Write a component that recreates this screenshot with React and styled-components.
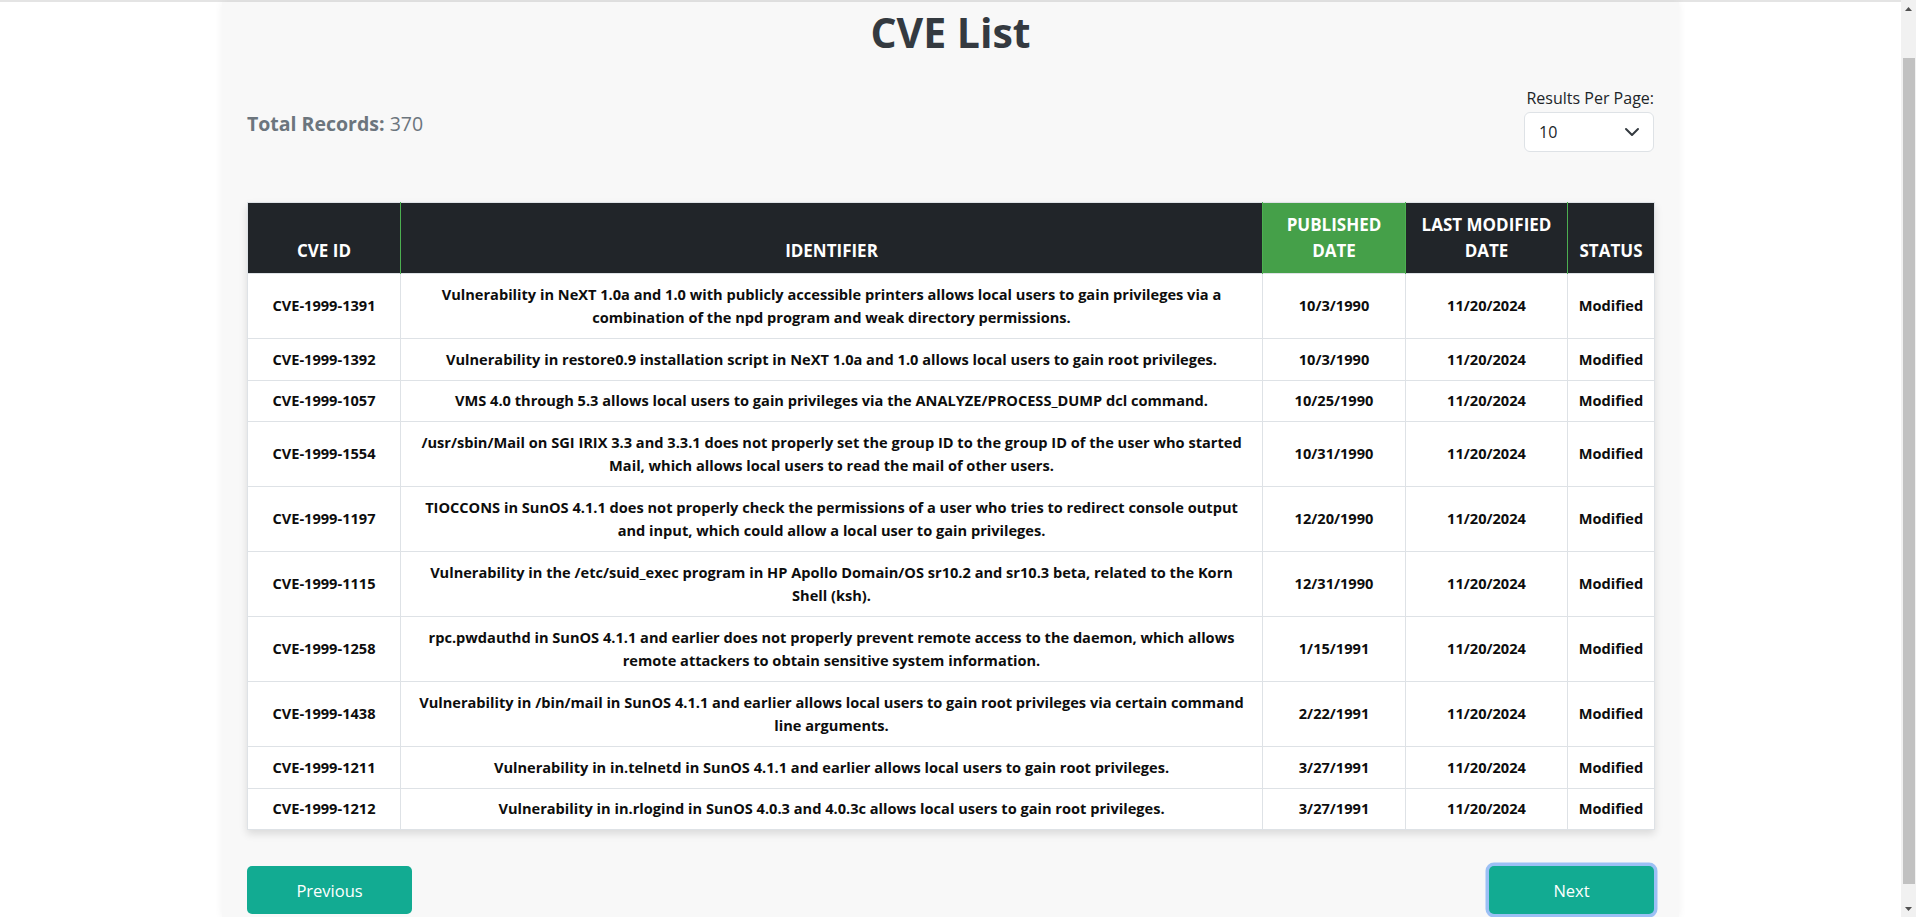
import React from "react";
import styled, { createGlobalStyle } from "styled-components";

const GlobalStyle = createGlobalStyle`
  body {
    margin: 0;
    background: #ffffff;
    font-family: "Open Sans", "Noto Sans", sans-serif;
    color: #212529;
  }
`;

const Window = styled.div`
  display: flex;
  height: 100vh;
  overflow: hidden;
`;

const Viewport = styled.div`
  flex: 1;
  display: flex;
  flex-direction: column;
  min-width: 0;
`;

const TopRule = styled.div`
  height: 2px;
  flex: none;
  background: #e4e4e4;
`;

const Page = styled.main`
  flex: 1;
  width: 1457px;
  margin: 0 auto;
  box-sizing: border-box;
  padding: 5px 25px 0;
  background: #f8f8f8;
  box-shadow: 0 0 8px rgba(0, 0, 0, 0.06);
`;

const Title = styled.h1`
  margin: 0;
  font-size: 41px;
  line-height: 50px;
  font-weight: 700;
  text-align: center;
  color: #343a40;
`;

const Toolbar = styled.div`
  display: flex;
  justify-content: space-between;
  align-items: center;
  margin-top: 30px;
`;

const Total = styled.div`
  font-size: 19.5px;
  line-height: 30px;
  color: #6c757d;
  padding-top: 8px;

  & strong {
    font-weight: 700;
  }
`;

const PerPage = styled.label`
  display: flex;
  flex-direction: column;
  align-items: flex-end;
  font-size: 16px;
  line-height: 22px;
  color: #212529;
`;

const SelectBox = styled.div`
  position: relative;
  width: 130px;
  margin-top: 3px;
`;

const Select = styled.select`
  appearance: none;
  width: 100%;
  height: 40px;
  box-sizing: border-box;
  padding: 0 32px 0 14px;
  border: 1px solid #dee2e6;
  border-radius: 6px;
  background: #ffffff;
  font-family: inherit;
  font-size: 16px;
  color: #212529;
`;

const Chevron = styled.svg`
  position: absolute;
  right: 14px;
  top: 12px;
  pointer-events: none;
`;

const Table = styled.table`
  width: 100%;
  margin-top: 50px;
  border-collapse: collapse;
  table-layout: fixed;
  background: #ffffff;
  box-shadow: 0 4px 8px rgba(0, 0, 0, 0.12);
  border: 1px solid #dee2e6;
`;

const Col = styled.col`
  width: ${(p) => p.$w}px;
`;

const Th = styled.th`
  padding: 9px 6px;
  vertical-align: bottom;
  text-align: center;
  text-transform: uppercase;
  font-size: 17px;
  line-height: 26px;
  font-weight: 700;
  color: #ffffff;
  background: ${(p) => (p.$sorted ? "#45a049" : "#212529")};
  border-left: 1px solid #4caf50;

  &:first-child {
    border-left: none;
  }
`;

const Td = styled.td`
  padding: 8.5px 8px;
  vertical-align: middle;
  text-align: center;
  white-space: pre-line;
  font-size: 14.6px;
  line-height: 23.5px;
  font-weight: 700;
  color: #0d0d0d;
  border: 1px solid #dee2e6;
`;

const Pager = styled.div`
  display: flex;
  justify-content: space-between;
  margin-top: 36px;
`;

const PageButton = styled.button`
  width: 165px;
  height: 48px;
  border: none;
  border-radius: 5px;
  background: #12ab92;
  color: #ffffff;
  font-family: inherit;
  font-size: 16.5px;
  box-shadow: ${(p) => (p.$focused ? "0 0 0 3.5px #9cc0f5" : "none")};
  cursor: pointer;
`;

const Rail = styled.div`
  width: 15px;
  flex: none;
  display: flex;
  flex-direction: column;
  background: #f1f1f1;
`;

const RailArrow = styled.div`
  height: 17px;
  flex: none;
  display: flex;
  align-items: center;
  justify-content: center;
`;

const Track = styled.div`
  flex: 1;
  display: flex;
  flex-direction: column;
  padding: 41px 1px 16px 2px;
`;

const Thumb = styled.div`
  flex: 1;
  background: #c1c1c1;
`;

const columns = [
  { label: "CVE ID", w: 153 },
  { label: "Identifier", w: 862 },
  { label: "Published Date", w: 143, sorted: true },
  { label: "Last Modified Date", w: 162 },
  { label: "Status", w: 87 },
];

const rows = [
  ["CVE-1999-1391", "Vulnerability in NeXT 1.0a and 1.0 with publicly accessible printers allows local users to gain privileges via a\ncombination of the npd program and weak directory permissions.", "10/3/1990"],
  ["CVE-1999-1392", "Vulnerability in restore0.9 installation script in NeXT 1.0a and 1.0 allows local users to gain root privileges.", "10/3/1990"],
  ["CVE-1999-1057", "VMS 4.0 through 5.3 allows local users to gain privileges via the ANALYZE/PROCESS_DUMP dcl command.", "10/25/1990"],
  ["CVE-1999-1554", "/usr/sbin/Mail on SGI IRIX 3.3 and 3.3.1 does not properly set the group ID to the group ID of the user who started\nMail, which allows local users to read the mail of other users.", "10/31/1990"],
  ["CVE-1999-1197", "TIOCCONS in SunOS 4.1.1 does not properly check the permissions of a user who tries to redirect console output\nand input, which could allow a local user to gain privileges.", "12/20/1990"],
  ["CVE-1999-1115", "Vulnerability in the /etc/suid_exec program in HP Apollo Domain/OS sr10.2 and sr10.3 beta, related to the Korn\nShell (ksh).", "12/31/1990"],
  ["CVE-1999-1258", "rpc.pwdauthd in SunOS 4.1.1 and earlier does not properly prevent remote access to the daemon, which allows\nremote attackers to obtain sensitive system information.", "1/15/1991"],
  ["CVE-1999-1438", "Vulnerability in /bin/mail in SunOS 4.1.1 and earlier allows local users to gain root privileges via certain command\nline arguments.", "2/22/1991"],
  ["CVE-1999-1211", "Vulnerability in in.telnetd in SunOS 4.1.1 and earlier allows local users to gain root privileges.", "3/27/1991"],
  ["CVE-1999-1212", "Vulnerability in in.rlogind in SunOS 4.0.3 and 4.0.3c allows local users to gain root privileges.", "3/27/1991"],
];

export default function App() {
  return (
    <>
      <GlobalStyle />
      <Window>
        <Viewport>
          <TopRule />
          <Page>
            <Title>CVE List</Title>
            <Toolbar>
              <Total>
                <strong>Total Records:</strong> 370
              </Total>
              <PerPage>
                Results Per Page:
                <SelectBox>
                  <Select defaultValue="10">
                    <option value="10">10</option>
                    <option value="25">25</option>
                    <option value="50">50</option>
                  </Select>
                  <Chevron width="16" height="16" viewBox="0 0 16 16">
                    <path d="m2 5 6 6 6-6" fill="none" stroke="#343a40" strokeWidth="2" strokeLinecap="round" strokeLinejoin="round" />
                  </Chevron>
                </SelectBox>
              </PerPage>
            </Toolbar>
            <Table>
              <colgroup>
                {columns.map((c) => (
                  <Col key={c.label} $w={c.w} />
                ))}
              </colgroup>
              <thead>
                <tr>
                  {columns.map((c) => (
                    <Th key={c.label} $sorted={c.sorted}>
                      {c.label}
                    </Th>
                  ))}
                </tr>
              </thead>
              <tbody>
                {rows.map(([id, text, published]) => (
                  <tr key={id}>
                    <Td>{id}</Td>
                    <Td>{text}</Td>
                    <Td>{published}</Td>
                    <Td>11/20/2024</Td>
                    <Td>Modified</Td>
                  </tr>
                ))}
              </tbody>
            </Table>
            <Pager>
              <PageButton>Previous</PageButton>
              <PageButton $focused>Next</PageButton>
            </Pager>
          </Page>
        </Viewport>
        <Rail>
          <RailArrow>
            <svg width="7" height="4" viewBox="0 0 7 4">
              <path d="M0 4 3.5 0 7 4Z" fill="#505050" />
            </svg>
          </RailArrow>
          <Track>
            <Thumb />
          </Track>
          <RailArrow>
            <svg width="7" height="4" viewBox="0 0 7 4">
              <path d="M0 0 3.5 4 7 0Z" fill="#505050" />
            </svg>
          </RailArrow>
        </Rail>
      </Window>
    </>
  );
}
